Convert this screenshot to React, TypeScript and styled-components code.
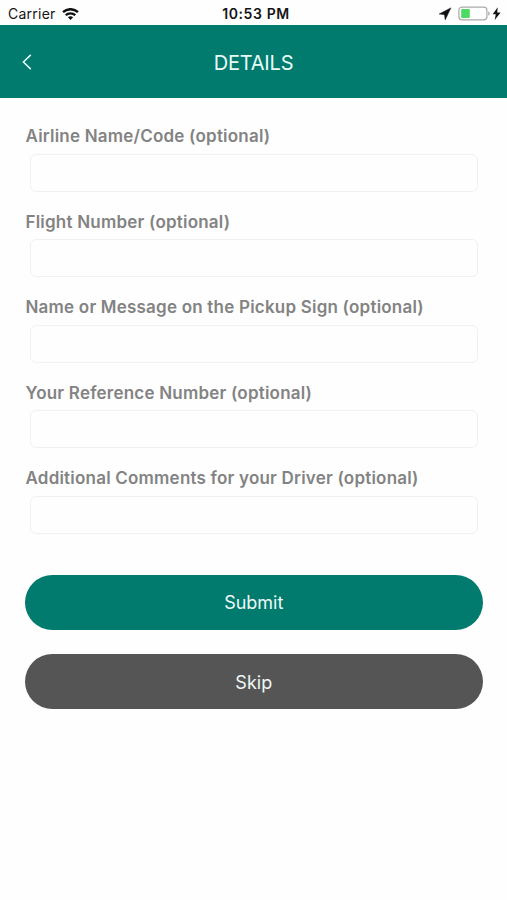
import React from "react";
import styled, { createGlobalStyle } from "styled-components";

const GlobalStyle = createGlobalStyle`
  * { box-sizing: border-box; }
  body { margin: 0; background: #fefefe; font-family: Inter, "Liberation Sans", sans-serif; }
`;

const Screen = styled.div`
  display: flex;
  flex-direction: column;
  height: 900px;
  overflow: hidden;
`;

const StatusBar = styled.div`
  display: grid;
  grid-template-columns: 1fr auto 1fr;
  align-items: center;
  height: 25.3px;
  padding: 2px 4px 0 8px;
  color: #151515;
  font-size: 14px;
`;

const StatusGroup = styled.div<{ $end?: boolean }>`
  display: flex;
  align-items: center;
  gap: ${(p) => (p.$end ? "0" : "6px")};
  justify-content: ${(p) => (p.$end ? "flex-end" : "flex-start")};
  svg { display: block; }
`;

const Carrier = styled.span`
  letter-spacing: 0.25px;
`;

const Clock = styled.span`
  padding-left: 1px;
  font-weight: 600;
  font-size: 14px;
  letter-spacing: 0.6px;
`;

const Header = styled.header`
  display: grid;
  grid-template-columns: 54px 1fr 54px;
  align-items: center;
  height: 73px;
  background: #017b6e;
  color: #e9fbf8;
`;

const BackButton = styled.button`
  display: flex;
  justify-content: center;
  padding: 0;
  border: 0;
  background: none;
  color: inherit;
`;

const Title = styled.h1`
  margin: 0;
  padding-top: 2px;
  text-align: center;
  font-size: 20px;
  font-weight: 400;
  letter-spacing: -0.2px;
`;

const Form = styled.form`
  display: flex;
  flex-direction: column;
  padding: 26.2px 24.5px 0 25px;
`;

const Field = styled.label`
  display: flex;
  flex-direction: column;
  height: 85.5px;
`;

const Label = styled.span`
  height: 24px;
  margin-bottom: 5.5px;
  padding-left: 0.5px;
  line-height: 24px;
  font-size: 17px;
  font-weight: 600;
  letter-spacing: 0.21px;
  color: #838383;
  white-space: nowrap;
`;

const Input = styled.input`
  height: 38px;
  margin: 0 5px;
  padding: 0 10px;
  border: 1.5px solid #f1f1f1;
  border-radius: 6px;
  background: #fefefe;
  font: inherit;
  outline: none;
`;

const Actions = styled.div`
  display: flex;
  flex-direction: column;
  gap: 24.4px;
  padding-top: 22.9px;
`;

const Button = styled.button<{ $tone: "primary" | "neutral" }>`
  height: 55px;
  padding: 1px 0 0;
  border: 0;
  border-radius: 28px;
  background: ${(p) => (p.$tone === "primary" ? "#017b6e" : "#555555")};
  color: #f0f8f7;
  font-family: inherit;
  font-size: 18px;
  font-weight: 400;
`;

const fields = [
  "Airline Name/Code (optional)",
  "Flight Number (optional)",
  "Name or Message on the Pickup Sign (optional)",
  "Your Reference Number (optional)",
  "Additional Comments for your Driver (optional)",
];

const WifiIcon = () => (
  <svg width="17" height="12" viewBox="0 0 17 12" fill="none" stroke="#111" strokeWidth="2.4">
    <path d="M1 4.1C5.2 .2 11.8 .2 16 4.1" />
    <path d="M3.7 7.2C6.4 4.7 10.6 4.7 13.3 7.2" />
    <path d="M8.5 12 5.9 9.3C7.3 8 9.7 8 11.1 9.3Z" fill="#111" stroke="none" />
  </svg>
);

const StatusIcons = () => (
  <svg width="65" height="16" viewBox="0 0 65 16">
    <path d="M13 1.8 1 8 6.4 8.7 7.2 14Z" fill="#111" stroke="#111" strokeWidth=".4" />
    <rect x="20.9" y="1.2" width="28" height="12.6" rx="3" fill="#fff" stroke="#aaa" strokeWidth="1.2" />
    <rect x="23.2" y="3.1" width="8.6" height="8.8" rx="1" fill="#4cd964" />
    <path d="M50.3 5.3C52.1 6.1 52.1 9 50.3 9.8Z" fill="#999" />
    <path d="M59.7 1.3 54.7 8.3H57.8L56.7 13.9 62.6 6.4H59.2Z" fill="#111" />
  </svg>
);

export default function App() {
  return (
    <Screen>
      <GlobalStyle />
      <StatusBar>
        <StatusGroup>
          <Carrier>Carrier</Carrier>
          <WifiIcon />
        </StatusGroup>
        <Clock>10:53 PM</Clock>
        <StatusGroup $end>
          <StatusIcons />
        </StatusGroup>
      </StatusBar>
      <Header>
        <BackButton type="button" aria-label="Back">
          <svg width="10" height="16" viewBox="0 0 10 16" fill="none" stroke="currentColor" strokeWidth="1.5">
            <path d="M8.8 .9 1.4 8 8.8 15.1" />
          </svg>
        </BackButton>
        <Title>DETAILS</Title>
      </Header>
      <Form onSubmit={(e) => e.preventDefault()}>
        {fields.map((name) => (
          <Field key={name}>
            <Label>{name}</Label>
            <Input type="text" />
          </Field>
        ))}
        <Actions>
          <Button type="submit" $tone="primary">Submit</Button>
          <Button type="button" $tone="neutral">Skip</Button>
        </Actions>
      </Form>
    </Screen>
  );
}
